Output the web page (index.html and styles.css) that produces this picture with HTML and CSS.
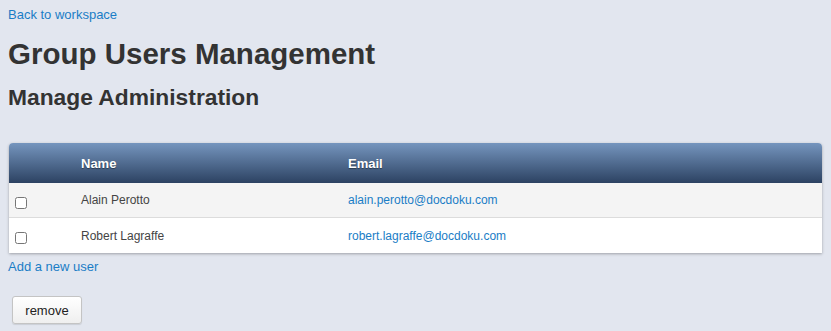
FILE: index.html
```html
<!DOCTYPE html>
<html>
<head>
<meta charset="utf-8">
<link rel="stylesheet" href="styles.css">
</head>
<body>
<a class="link back" href="#">Back to workspace</a>
<h1 class="title">Group Users Management</h1>
<h2 class="subtitle">Manage Administration</h2>
<div class="table-wrap">
  <table class="users">
    <thead>
      <tr><th class="col-check"></th><th class="col-name">Name</th><th>Email</th></tr>
    </thead>
    <tbody>
      <tr class="odd"><td class="col-check"><input type="checkbox" class="cb"></td><td>Alain Perotto</td><td><a class="link" href="#">alain.perotto@docdoku.com</a></td></tr>
      <tr><td class="col-check"><input type="checkbox" class="cb"></td><td>Robert Lagraffe</td><td><a class="link" href="#">robert.lagraffe@docdoku.com</a></td></tr>
    </tbody>
  </table>
</div>
<a class="link add" href="#">Add a new user</a>
<div class="actions"><button class="btn">remove</button></div>
</body>
</html>
```
FILE: styles.css
```css
html, body { margin: 0; padding: 0; }
body {
  background: #e2e6ef;
  font-family: "Liberation Sans", Arial, sans-serif;
  font-size: 13px;
  color: #333;
  padding: 7px 8px 8px 8px;
}
.link { color: #1a7dc6; text-decoration: none; }
.back { display: block; line-height: 16px; }
.title {
  font-size: 29.5px;
  font-weight: bold;
  margin: 14px 0 0 0;
  line-height: 34px;
  color: #333;
}
.subtitle {
  font-size: 22.8px;
  font-weight: bold;
  margin: 13px 0 0 0;
  line-height: 26px;
  color: #333;
}
.table-wrap {
  margin: 33px 1px 0 1px;
  border-radius: 4px 4px 0 0;
  overflow: hidden;
  box-shadow: 0 1px 3px rgba(0,0,0,0.3);
  background: #fff;
}
.users { width: 100%; border-collapse: collapse; }
.users th {
  height: 40px;
  padding: 0;
  text-align: left;
  color: #fff;
  font-weight: bold;
  font-size: 13px;
  text-shadow: 0 1px 1px rgba(0,0,0,0.4);
  background: linear-gradient(#7595be, #2c4262);
  vertical-align: middle;
}
.users td {
  height: 35px;
  padding: 0;
  vertical-align: middle;
  color: #444;
  font-size: 12px;
}
.users tbody tr { background: #fff; }
.users tbody tr.odd { background: #f4f4f4; border-bottom: 1px solid #dcdcdc; }
.users tbody tr.odd td { height: 34px; }
.col-check { width: 72px; }
.col-name { width: 267px; }
.cb {
  margin: 8px 0 0 6px;
  width: 12px; height: 12px;
}
.add { display: block; margin-top: 6px; line-height: 16px; }
.actions { margin-top: 21px; padding-left: 4px; }
.btn {
  font-family: "Liberation Sans", Arial, sans-serif;
  font-size: 13px;
  color: #222;
  background: linear-gradient(#ffffff, #efefef);
  border: 1px solid #c4c4c4;
  border-radius: 3px;
  width: 70px;
  height: 28px;
  padding: 0;
  box-shadow: 0 1px 1px rgba(0,0,0,0.1);
}
```
